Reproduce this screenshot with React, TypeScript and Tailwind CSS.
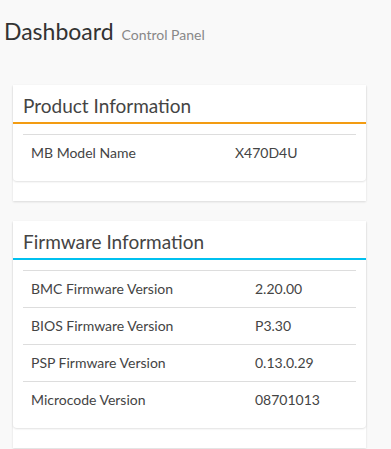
const product = [{ label: "MB Model Name", value: "X470D4U" }];

const firmware = [
  { label: "BMC Firmware Version", value: "2.20.00" },
  { label: "BIOS Firmware Version", value: "P3.30" },
  { label: "PSP Firmware Version", value: "0.13.0.29" },
  { label: "Microcode Version", value: "08701013" },
];

function InfoBox({
  title,
  rows,
  accent,
  labelWidth,
}: {
  title: string;
  rows: { label: string; value: string }[];
  accent: string;
  labelWidth: string;
}) {
  return (
    <div className="bg-white shadow-[0_1px_2px_rgba(0,0,0,0.12)] pb-5">
      <div className="rounded-b shadow-[0_1px_2px_rgba(0,0,0,0.12)] pb-2.5">
        <div className={`h-[39px] px-2.5 pt-[3px] flex items-center border-b-2 ${accent}`}>
          <h3 className="text-[19px] text-[#444] leading-none">{title}</h3>
        </div>
        <div className="px-2.5 pt-2.5">
          {rows.map((r) => (
            <div key={r.label} className="flex h-[37px] items-center border-t border-[#ddd] px-2 text-[14px] text-[#444] pb-px">
              <span className={labelWidth}>{r.label}</span>
              <span>{r.value}</span>
            </div>
          ))}
        </div>
      </div>
    </div>
  );
}

export default function App() {
  return (
    <div className="min-h-[449px] bg-[#f9f9f9] pr-[25px] font-['Lato','Noto_Sans',sans-serif]">
      <div className="flex items-baseline pl-1 pt-5 h-[85px]">
        <h1 className="text-[23px] text-[#333] leading-none">Dashboard</h1>
        <span className="ml-2 text-[14px] text-[#888]">Control Panel</span>
      </div>
      <div className="pl-[13px] flex flex-col gap-5">
        <InfoBox title="Product Information" rows={product} accent="border-[#f39c12]" labelWidth="w-[204px]" />
        <InfoBox title="Firmware Information" rows={firmware} accent="border-[#00c0ef]" labelWidth="w-[224px]" />
      </div>
    </div>
  );
}
